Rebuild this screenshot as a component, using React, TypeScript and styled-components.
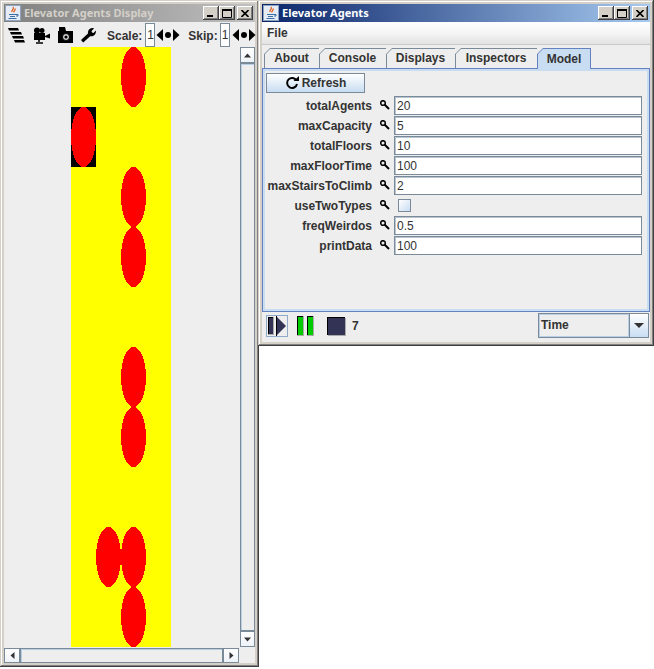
import React from 'react';
import styled, { createGlobalStyle } from 'styled-components';

const GlobalStyle = createGlobalStyle`
  html, body {
    margin: 0;
    padding: 0;
    background: #fff;
  }
  * {
    box-sizing: border-box;
  }
`;

const Desktop = styled.div`
  position: relative;
  width: 654px;
  height: 669px;
  overflow: hidden;
  background: #fff;
  font-family: "Liberation Sans", Arial, sans-serif;
  font-size: 12px;
  font-weight: bold;
  color: #333;
`;

const Frame = styled.div<{ $left: number; $width: number; $height: number }>`
  position: absolute;
  top: 0;
  left: ${p => p.$left}px;
  width: ${p => p.$width}px;
  height: ${p => p.$height}px;
  padding: 4px;
  display: flex;
  flex-direction: column;
  background: #d4d0c8;
  box-shadow: inset -1px -1px 0 #404040, inset 1px 1px 0 #d4d0c8, inset -2px -2px 0 #808080, inset 2px 2px 0 #fff;
`;

const TitleBar = styled.div<{ $active?: boolean }>`
  height: 18px;
  flex: none;
  display: flex;
  align-items: center;
  padding: 0 2px 0 1px;
  gap: 3px;
  background: ${p => p.$active
    ? 'linear-gradient(90deg, #0a246a, #a6caf0)'
    : 'linear-gradient(90deg, #808080, #c0c0c0)'};
`;

const TitleText = styled.span<{ $active?: boolean }>`
  flex: 1;
  font-family: "Noto Sans", Tahoma, sans-serif;
  font-size: 11px;
  line-height: 16px;
  white-space: nowrap;
  color: ${p => (p.$active ? '#fff' : '#d4d0c8')};
`;

const TitleButtons = styled.div`
  display: flex;
  align-items: center;
`;

const CaptionButton = styled.div<{ $gap?: boolean }>`
  width: 16px;
  height: 14px;
  margin-left: ${p => (p.$gap ? 2 : 0)}px;
  background: #d4d0c8;
  box-shadow: inset -1px -1px 0 #404040, inset 1px 1px 0 #fff, inset -2px -2px 0 #808080;
  display: flex;
  align-items: center;
  justify-content: center;
`;

const Body = styled.div`
  flex: 1;
  min-height: 0;
  background: #eee;
  display: flex;
  flex-direction: column;
`;

const Toolbar = styled.div`
  height: 25px;
  flex: none;
  display: flex;
  align-items: center;
  padding: 1px 0 0 3px;
  white-space: nowrap;
`;

const ToolIcon = styled.span<{ $w: number; $ml?: number }>`
  width: ${p => p.$w}px;
  height: 20px;
  margin-left: ${p => p.$ml ?? 0}px;
  flex: none;
  display: flex;
  align-items: center;
  justify-content: center;
`;

const ToolLabel = styled.span<{ $ml: number }>`
  margin-left: ${p => p.$ml}px;
  padding-top: 2px;
`;

const SmallField = styled.span<{ $ml: number }>`
  width: 10px;
  height: 24px;
  margin-left: ${p => p.$ml}px;
  flex: none;
  background: #fff;
  border: 1px solid #7a8a99;
  font-weight: normal;
  font-size: 12px;
  line-height: 22px;
  padding-left: 1px;
  overflow: hidden;
`;

const ScrollArea = styled.div`
  flex: 1;
  min-height: 0;
  display: grid;
  grid-template-columns: 236px 15px;
  grid-template-rows: 600px 15px;
  row-gap: 1px;
`;

const Viewport = styled.div`
  display: flex;
  justify-content: center;
  padding-right: 2px;
`;

const Canvas = styled.div`
  width: 100px;
  height: 600px;
  background: #ff0;
  display: grid;
  grid-template-columns: repeat(4, 25px);
  grid-template-rows: repeat(10, 60px);
`;

const Cell = styled.div<{ $col: number; $row: number; $occupied?: boolean }>`
  grid-column: ${p => p.$col + 1};
  grid-row: ${p => p.$row + 1};
  background: ${p => (p.$occupied ? '#000' : 'transparent')};
  svg {
    display: block;
  }
`;

const VScroll = styled.div`
  display: flex;
  flex-direction: column;
  width: 15px;
`;

const HScroll = styled.div`
  display: flex;
  height: 15px;
  width: 235px;
`;

const ArrowButton = styled.div<{ $long?: 'w' | 'h' }>`
  width: ${p => (p.$long === 'w' ? 16 : 15)}px;
  height: ${p => (p.$long === 'h' ? 16 : 15)}px;
  flex: none;
  border: 1px solid #7a8a99;
  background: linear-gradient(180deg, #fff, #eef3f9);
  display: flex;
  align-items: center;
  justify-content: center;
`;

const Track = styled.div`
  flex: 1;
  border: 1px solid #7a8a99;
  box-shadow: inset 1px 1px 0 #b8cfe5;
  background: #eee;
`;

const MenuBar = styled.div`
  height: 23px;
  flex: none;
  display: flex;
  align-items: center;
  padding-left: 5px;
  background: linear-gradient(180deg, #fff 0%, #f5f5f5 50%, #e2e2e2 100%);
  border-bottom: 1px solid #c8c8c8;
`;

const TabStrip = styled.div`
  height: 20px;
  margin-top: 3px;
  padding-left: 2px;
  display: flex;
  flex: none;
  position: relative;
  z-index: 1;
`;

const Tab = styled.div<{ $w: number; $selected?: boolean }>`
  position: relative;
  width: ${p => p.$w}px;
  height: ${p => (p.$selected ? 21 : 20)}px;
  background: ${p => (p.$selected ? '#6382bf' : '#7a8a99')};
  clip-path: polygon(0 6px, 6px 0, 100% 0, 100% 100%, 0 100%);
  display: flex;
  align-items: center;
  justify-content: center;
  &::before {
    content: '';
    position: absolute;
    inset: ${p => (p.$selected ? '1px 1px 0 1px' : '1px 0 0 1px')};
    background: ${p => (p.$selected ? '#c8ddf2' : '#eee')};
    clip-path: polygon(0 5px, 5px 0, 100% 0, 100% 100%, 0 100%);
  }
  span {
    position: relative;
  }
`;

const TabPanel = styled.div`
  height: 244px;
  flex: none;
  border: 1px solid #6382bf;
  box-shadow: inset 0 0 0 2px #c8ddf2;
  padding: 4px 8px 0 3px;
  background: #eee;
  display: flex;
  flex-direction: column;
  align-items: flex-start;
`;

const RefreshButton = styled.div`
  width: 99px;
  height: 20px;
  flex: none;
  border: 1px solid #7a8a99;
  background: linear-gradient(180deg, #fff, #c8ddf2);
  display: flex;
  align-items: center;
  justify-content: center;
  gap: 3px;
`;

const FieldList = styled.div`
  margin-top: 2px;
  width: 100%;
  display: flex;
  flex-direction: column;
`;

const FieldRow = styled.div`
  height: 20px;
  display: flex;
  align-items: center;
`;

const FieldLabel = styled.span`
  width: 106px;
  flex: none;
  padding-top: 2px;
  text-align: right;
  white-space: nowrap;
`;

const Key = styled.span`
  width: 22px;
  padding-left: 3px;
  flex: none;
  display: flex;
  justify-content: center;
`;

const Input = styled.div`
  width: 248px;
  height: 19px;
  margin-top: 1px;
  flex: none;
  background: #fff;
  border: 1px solid #7a8a99;
  box-shadow: inset 1px 1px 0 #b8c4d0;
  font-weight: normal;
  line-height: 18px;
  padding-left: 2px;
`;

const CheckBox = styled.div`
  width: 13px;
  height: 13px;
  margin-left: 4px;
  border: 1px solid #7a8a99;
  background: linear-gradient(135deg, #fff, #c8ddf2);
`;

const StatusBar = styled.div`
  flex: 1;
  display: flex;
  align-items: center;
  padding: 0 1px 3px 4px;
`;

const PlayButton = styled.div`
  width: 22px;
  height: 22px;
  flex: none;
  border: 1px solid #8fa9c8;
  display: flex;
  align-items: center;
  justify-content: center;
`;

const PauseIcon = styled.div`
  width: 18px;
  height: 20px;
  margin-left: 9px;
  flex: none;
  display: flex;
  align-items: center;
  justify-content: center;
`;

const StopIcon = styled.div`
  width: 18px;
  height: 18px;
  margin-left: 12px;
  flex: none;
  background: #333355;
  border-top: 1px solid #000;
  border-left: 1px solid #000;
  box-shadow: 1px 1px 0 #aaa;
`;

const Tick = styled.span`
  margin-left: 7px;
  flex: 1;
`;

const Combo = styled.div`
  width: 111px;
  height: 25px;
  flex: none;
  border: 1px solid #7a8a99;
  display: flex;
`;

const ComboValue = styled.div`
  flex: 1;
  line-height: 21px;
  padding-left: 1px;
  background: #eee;
  border: 1px solid #b8cfe5;
`;

const ComboArrow = styled.div`
  width: 19px;
  flex: none;
  border-left: 1px solid #7a8a99;
  background: linear-gradient(180deg, #fff, #c8ddf2);
  display: flex;
  align-items: center;
  justify-content: center;
`;

const JavaIcon = () => (
  <svg width="16" height="16" viewBox="0 0 16 16">
    <rect x="0.500" y="0.500" width="15" height="15" fill="#e6ecf5" stroke="#8ea3c0" />
    <path d="M8 2c2 2-2 3-1 5M10 3.500c1 2-2 2.500-1 4" stroke="#e0601a" strokeWidth="1.300" fill="none" />
    <path d="M4 9h7v1H4zM5 11h5v1H5zM3.500 13h8v1h-8z" fill="#3a6ea5" />
    <path d="M11 9.500h2v1.500h-2" stroke="#3a6ea5" fill="none" />
  </svg>
);

const Caption = () => (
  <TitleButtons>
    <CaptionButton>
      <svg width="8" height="8" viewBox="0 0 8 8"><rect x="0" y="6" width="6" height="2" fill="#000" /></svg>
    </CaptionButton>
    <CaptionButton>
      <svg width="10" height="9" viewBox="0 0 10 9"><path d="M0.500 1.500h9v7h-9z" fill="none" stroke="#000" /><rect width="10" height="2" fill="#000" /></svg>
    </CaptionButton>
    <CaptionButton $gap>
      <svg width="8" height="7" viewBox="0 0 8 7"><path d="M0.500 0l7 7M7.500 0l-7 7" stroke="#000" strokeWidth="1.600" /></svg>
    </CaptionButton>
  </TitleButtons>
);

const WrenchIcon = () => (
  <svg width="16" height="16" viewBox="0 0 16 16">
    <path d="M1 13 8 6.500C7.500 3.500 9.500 1 13 1l1 .4L11.500 4l.5 1.500 1.500.5L15.800 3.500c.6 3.500-2.300 6.500-5.600 5.700L3.200 15.500z" fill="#000" />
  </svg>
);

const KeyIcon = () => (
  <svg width="10" height="10" viewBox="0 0 10 10">
    <circle cx="3" cy="3" r="2.300" fill="none" stroke="#000" strokeWidth="1.500" />
    <path d="M4.500 4.500 9 9" stroke="#000" strokeWidth="2" />
  </svg>
);

const Spinner = () => (
  <svg width="24" height="12" viewBox="0 0 24 12">
    <path d="M7 0v3L4 6l3 3v3L0.500 6z" fill="#000" />
    <path d="M7 2v8L3 6z" fill="#000" />
    <circle cx="12" cy="6" r="3" fill="#000" />
    <path d="M17 0v3l3 3-3 3v3l6.500-6z" fill="#000" />
    <path d="M17 2v8l4-4z" fill="#000" />
  </svg>
);

const Triangle = ({ dir }: { dir: 'up' | 'down' | 'left' | 'right' }) => {
  const points = {
    up: '0,4 3.500,0 7,4',
    down: '0,0 7,0 3.500,4',
    left: '4,0 4,7 0,3.500',
    right: '0,0 0,7 4,3.500',
  }[dir];
  return (
    <svg width="7" height="7" viewBox="0 0 7 7">
      <polygon points={points} fill="#333" transform={dir === 'up' || dir === 'down' ? 'translate(0 1.500)' : 'translate(1.500 0)'} />
    </svg>
  );
};

const ovals = [
  { col: 2, row: 0 },
  { col: 0, row: 1, occupied: true },
  { col: 2, row: 2 },
  { col: 2, row: 3 },
  { col: 2, row: 5 },
  { col: 2, row: 6 },
  { col: 1, row: 8 },
  { col: 2, row: 8 },
  { col: 2, row: 9 },
];

const tabs = [
  { name: 'About', w: 55 },
  { name: 'Console', w: 67 },
  { name: 'Displays', w: 69 },
  { name: 'Inspectors', w: 82 },
  { name: 'Model', w: 54, selected: true },
];

const fields = [
  { name: 'totalAgents', value: '20' },
  { name: 'maxCapacity', value: '5' },
  { name: 'totalFloors', value: '10' },
  { name: 'maxFloorTime', value: '100' },
  { name: 'maxStairsToClimb', value: '2' },
  { name: 'useTwoTypes', check: true },
  { name: 'freqWeirdos', value: '0.5' },
  { name: 'printData', value: '100' },
];

const App = () => (
  <Desktop>
    <GlobalStyle />

    {/* Display window */}
    <Frame $left={0} $width={259} $height={667}>
      <TitleBar>
        <JavaIcon />
        <TitleText>Elevator Agents Display</TitleText>
        <Caption />
      </TitleBar>
      <Body>
        <Toolbar>
          <ToolIcon $w={18}>
            <svg width="17" height="15" viewBox="0 0 17 15">
              <path d="M0 0h10l1 2.500H1zM2 4h11l1 2.500H3zM4 8h11l1 2.500H5zM6 12h10l1 2.500H7z" fill="#000" />
            </svg>
          </ToolIcon>
          <ToolIcon $w={18} $ml={7}>
            <svg width="17" height="17" viewBox="0 0 17 17">
              <circle cx="4" cy="3.500" r="3" fill="#000" />
              <circle cx="9" cy="3.500" r="2.500" fill="#000" />
              <rect x="1" y="6" width="11" height="7" fill="#000" />
              <path d="M12 9l5-2.500v5L12 10z" fill="#000" />
              <path d="M6 13v2M3 16h7" stroke="#000" strokeWidth="1.600" />
            </svg>
          </ToolIcon>
          <ToolIcon $w={16} $ml={7}>
            <svg width="15" height="16" viewBox="0 0 15 16">
              <path d="M0 4h1V0h6l1 4h7v12H0z" fill="#000" />
              <circle cx="8" cy="10" r="3.500" fill="#ddd" stroke="#000" />
              <circle cx="8" cy="10" r="1.600" fill="#000" />
            </svg>
          </ToolIcon>
          <ToolIcon $w={16} $ml={7}>
            <WrenchIcon />
          </ToolIcon>
          <ToolLabel $ml={11}>Scale:</ToolLabel>
          <SmallField $ml={3}>1</SmallField>
          <ToolIcon $w={24} $ml={1}><Spinner /></ToolIcon>
          <ToolLabel $ml={8}>Skip:</ToolLabel>
          <SmallField $ml={2}>1</SmallField>
          <ToolIcon $w={24} $ml={2}><Spinner /></ToolIcon>
        </Toolbar>
        <ScrollArea>
          <Viewport>
            <Canvas>
              {ovals.map(o => (
                <Cell key={`${o.col}-${o.row}`} $col={o.col} $row={o.row} $occupied={o.occupied}>
                  <svg width="25" height="60" viewBox="0 0 25 60">
                    <ellipse cx="12.500" cy="30" rx="12.500" ry="30" fill="#f00" shapeRendering="crispEdges" />
                  </svg>
                </Cell>
              ))}
            </Canvas>
          </Viewport>
          <VScroll>
            <ArrowButton $long="h"><Triangle dir="up" /></ArrowButton>
            <Track />
            <ArrowButton $long="h"><Triangle dir="down" /></ArrowButton>
          </VScroll>
          <HScroll>
            <ArrowButton $long="w"><Triangle dir="left" /></ArrowButton>
            <Track />
            <ArrowButton $long="w"><Triangle dir="right" /></ArrowButton>
          </HScroll>
        </ScrollArea>
      </Body>
    </Frame>

    {/* Controller window */}
    <Frame $left={258} $width={396} $height={346}>
      <TitleBar $active>
        <JavaIcon />
        <TitleText $active>Elevator Agents</TitleText>
        <Caption />
      </TitleBar>
      <Body>
        <MenuBar>File</MenuBar>
        <TabStrip>
          {tabs.map(t => (
            <Tab key={t.name} $w={t.w} $selected={t.selected}>
              <span>{t.name}</span>
            </Tab>
          ))}
        </TabStrip>
        <TabPanel>
          <RefreshButton>
            <svg width="14" height="14" viewBox="0 0 14 14">
              <path d="M11.500 4.500A5 5 0 1 0 12 8" fill="none" stroke="#000" strokeWidth="2" />
              <path d="M8.500 5H14V0z" fill="#000" />
            </svg>
            Refresh
          </RefreshButton>
          <FieldList>
            {fields.map(f => (
              <FieldRow key={f.name}>
                <FieldLabel>{f.name}</FieldLabel>
                <Key><KeyIcon /></Key>
                {f.check ? <CheckBox /> : <Input>{f.value}</Input>}
              </FieldRow>
            ))}
          </FieldList>
        </TabPanel>
        <StatusBar>
          <PlayButton>
            <svg width="20" height="20" viewBox="0 0 20 20">
              <path d="M1 1h6v18H1z" fill="#aaa" />
              <path d="M1 1h5v17H1z" fill="#000" />
              <path d="M2 2h4v16H2z" fill="#333355" />
              <path d="M9 0h1v20H9z" fill="#000" />
              <path d="M10 1l9 9-9 9z" fill="#333355" />
            </svg>
          </PlayButton>
          <PauseIcon>
            <svg width="18" height="20" viewBox="0 0 18 20">
              <path d="M0 0h7v20H0zM10 0h7v20h-7z" fill="#aaa" />
              <path d="M0 0h6v19H0zM10 0h6v19h-6z" fill="#000" />
              <path d="M1 1h5v18H1zM11 1h5v18h-5z" fill="#0c0" />
            </svg>
          </PauseIcon>
          <StopIcon />
          <Tick>7</Tick>
          <Combo>
            <ComboValue>Time</ComboValue>
            <ComboArrow>
              <svg width="10" height="5" viewBox="0 0 10 5"><path d="M0 0h10L5 5z" fill="#333" /></svg>
            </ComboArrow>
          </Combo>
        </StatusBar>
      </Body>
    </Frame>
  </Desktop>
);

export default App;
